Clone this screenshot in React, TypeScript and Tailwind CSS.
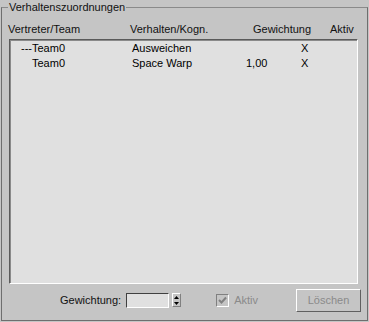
const font = { fontFamily: '"Liberation Sans", Arial, sans-serif' };

const rows = [
  { team: "---Team0", indent: "pl-[10px]", behavior: "Ausweichen", weight: "", active: "X" },
  { team: "Team0", indent: "pl-[21px]", behavior: "Space Warp", weight: "1,00", active: "X" },
];

function Spinner() {
  return (
    <div className="flex flex-col w-[9px] h-[14px] ml-[3px]">
      <div className="flex-1 flex items-center justify-center border-t border-l border-white border-r border-r-[#808080]">
        <svg width="5" height="3" viewBox="0 0 5 3">
          <path d="M2.5 0 L5 3 L0 3 Z" fill="#000" />
        </svg>
      </div>
      <div className="flex-1 flex items-center justify-center border-l border-white border-b border-r border-b-[#808080] border-r-[#808080]">
        <svg width="5" height="3" viewBox="0 0 5 3">
          <path d="M0 0 L5 0 L2.5 3 Z" fill="#000" />
        </svg>
      </div>
    </div>
  );
}

export default function App() {
  return (
    <div
      className="w-[369px] h-[322px] bg-[#c5c5c5] text-[11px] text-black pt-[1px] px-[1px] pb-[1px] overflow-hidden"
      style={font}
    >
      <fieldset className="h-[320px] border border-[#6e6e6e] border-t-[#8a8a8a] px-[7px] flex flex-col">
        <legend className="-ml-[1px] px-[1px] leading-[13px] text-[#111]">Verhaltenszuordnungen</legend>

        <div className="flex items-center h-[17px] mt-[7px] -ml-[1px] text-[#111]">
          <span className="w-[122px]">Vertreter/Team</span>
          <span className="w-[123px]">Verhalten/Kogn.</span>
          <span className="w-[77px]">Gewichtung</span>
          <span>Aktiv</span>
        </div>

        <div className="mt-[1px] h-[245px] w-[349px] border-t border-l border-[#5a5a5a] border-b border-r border-b-white border-r-white">
          <div className="h-full border-t border-l border-[#8a8a8a] bg-[#e0e0e0]">
            {rows.map((r) => (
              <div key={r.team + r.behavior} className="flex h-[15px] items-center">
                <span className={`w-[121px] ${r.indent}`}>{r.team}</span>
                <span className="w-[114px]">{r.behavior}</span>
                <span className="w-[55px]">{r.weight}</span>
                <span>{r.active}</span>
              </div>
            ))}
          </div>
        </div>

        <div className="flex items-center h-[24px] mt-[4px]">
          <span className="ml-[51px] text-[#111]">Gewichtung:</span>
          <div className="ml-[5px] w-[43px] h-[15px] border-t border-l border-[#404040] border-b border-r border-b-white border-r-white bg-[#e0e0e0]" />
          <Spinner />
          <div className="ml-[35px] flex items-center">
            <div className="w-[13px] h-[13px] border-t border-l border-[#808080] border-b border-r border-b-white border-r-white bg-[#c5c5c5] flex items-center justify-center">
              <svg width="9" height="9" viewBox="0 0 9 9">
                <path d="M1 4 L3.5 6.5 L8 1.5" stroke="#808080" strokeWidth="2" fill="none" />
              </svg>
            </div>
            <span className="ml-[5px] text-[#8a8a8a]">Aktiv</span>
          </div>
          <div className="ml-auto mr-[-1px] w-[65px] h-[23px] border border-t-white border-l-white border-b-[#606060] border-r-[#606060] flex items-center justify-center text-[#8a8a8a]">
            Löschen
          </div>
        </div>
      </fieldset>
    </div>
  );
}
